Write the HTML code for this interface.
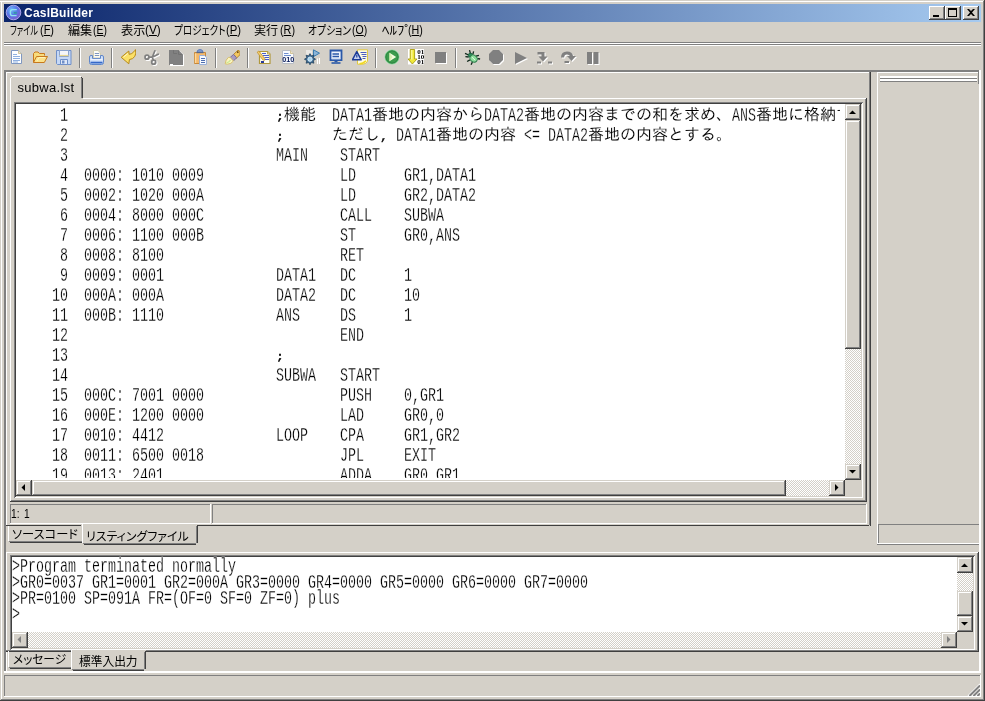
<!DOCTYPE html>
<html lang="ja"><head><meta charset="utf-8"><title>CaslBuilder</title>
<style>
*{box-sizing:border-box;margin:0;padding:0}
html,body{width:985px;height:701px;overflow:hidden;background:#d4d0c8}
body{position:relative;font-family:"Liberation Sans","Noto Sans CJK JP",sans-serif;font-feature-settings:"palt";font-size:12px;color:#000}
div,span,i,b,u,svg{position:absolute;display:block}
i{font-style:normal}
.t{white-space:pre;transform-origin:0 0;line-height:14px;height:14px}
.t u{position:static;display:inline;text-decoration:underline;text-decoration-thickness:1px;text-underline-offset:1px}
.mono{-webkit-text-stroke:.26px #fff}
.mono.pm{font-size:11.5px;transform:scaleX(1.1594);margin-top:1px;-webkit-text-stroke:.35px #000}
.jp{-webkit-text-stroke:.12px #fff}
#win{will-change:transform}
.mono,.jp{font-feature-settings:normal}
.mono{font-family:"Liberation Mono","IPAGothic",monospace;font-size:19.5px;line-height:20px;height:20px;white-space:pre;transform-origin:0 0;transform:scaleX(.68376)}
.jp{font-family:"Liberation Mono","IPAGothic",monospace;font-size:16px;line-height:20px;height:20px;white-space:pre}
.out .mono,.out .jp{line-height:16px;height:16px}
.btn{background:#d4d0c8;box-shadow:inset -1px -1px 0 #404040,inset 1px 1px 0 #fff,inset -2px -2px 0 #808080}
.sbtn{background:#d4d0c8;box-shadow:inset -1px -1px 0 #404040,inset 1px 1px 0 #d4d0c8,inset -2px -2px 0 #808080,inset 2px 2px 0 #fff}
.track{background-color:#fff;background-image:conic-gradient(#d4d0c8 25%,#fff 0 50%,#d4d0c8 0 75%,#fff 0);background-size:2px 2px}
.sunk{box-shadow:inset 1px 1px 0 #808080,inset -1px -1px 0 #fff,inset 2px 2px 0 #404040,inset -2px -2px 0 #d4d0c8}
</style></head>
<body>
<div id="win" style="left:0;top:0;width:985px;height:701px;background:#d4d0c8">
<i style="left:0px;top:1px;width:984px;height:1px;background:#ffffff"></i>
<i style="left:1px;top:1px;width:1px;height:698px;background:#ffffff"></i>
<i style="left:984px;top:0px;width:1px;height:701px;background:#404040"></i>
<i style="left:0px;top:700px;width:985px;height:1px;background:#404040"></i>
<i style="left:983px;top:1px;width:1px;height:699px;background:#808080"></i>
<i style="left:1px;top:699px;width:983px;height:1px;background:#808080"></i>
<div id="title" style="left:4px;top:4px;width:977px;height:18px;background:linear-gradient(90deg,#0a246a 0%,#a6caf0 100%)">
<svg style="left:1px;top:0px" width="18" height="18" viewBox="0 0 18 18">
<defs><radialGradient id="ig" cx="35%" cy="30%" r="75%"><stop offset="0" stop-color="#6fb8f8"/><stop offset=".5" stop-color="#5878e8"/><stop offset="1" stop-color="#7a5cd0"/></radialGradient></defs>
<circle cx="8.500" cy="8.500" r="7.300" fill="url(#ig)" stroke="#b4b0f4" stroke-width=".9"/>
<path d="M11.800 5.600H7.600Q5.400 5.600 5.400 7.800V9.400Q5.400 11.600 7.600 11.600H11.600" fill="none" stroke="#8fe4f0" stroke-width="1.400"/>
<path d="M8 7.800h3.800v2.200H8z" fill="#48a8c8"/><path d="M9 8.500h2.800v.9H9z" fill="#2a7890"/>
</svg>
<span class="t" style="left:20px;top:2px;font-weight:bold;font-size:12px;color:#fff;letter-spacing:.22px">CaslBuilder</span>
<div class="btn" style="left:925px;top:2px;width:16px;height:14px"><i style="left:4px;top:9px;width:6px;height:2px;background:#000"></i></div>
<div class="btn" style="left:941px;top:2px;width:16px;height:14px"><i style="left:3px;top:2px;width:9px;height:9px;border:1px solid #000;border-top-width:2px"></i></div>
<div class="btn" style="left:959px;top:2px;width:16px;height:14px"><svg style="left:4px;top:3px" width="8" height="7" viewBox="0 0 8 7"><path d="M0 0h2l2 2 2-2h2L5 3.5 8 7H6L4 5 2 7H0l3-3.5z" fill="#000"/></svg></div>
</div>
<div id="menu" style="left:4px;top:23px;width:977px;height:19px">
<div class="mi" style="left:0;top:0;width:0;height:19px">
<span class="t" style="left:6.03px;top:1px;transform:scaleX(0.6700);">ファイル</span>
<span class="t" style="left:35.69px;top:0px;transform:scaleX(0.9143);">(<u>F</u>)</span>
</div>
<div class="mi" style="left:0;top:0;width:0;height:19px">
<span class="t" style="left:64.00px;top:1px;transform:scaleX(1.0087);">編集</span>
<span class="t" style="left:88.73px;top:0px;transform:scaleX(0.8714);">(<u>E</u>)</span>
</div>
<div class="mi" style="left:0;top:0;width:0;height:19px">
<span class="t" style="left:117.10px;top:1px;transform:scaleX(1.0174);">表示</span>
<span class="t" style="left:141.41px;top:0px;transform:scaleX(0.9857);">(<u>V</u>)</span>
</div>
<div class="mi" style="left:0;top:0;width:0;height:19px">
<span class="t" style="left:170.30px;top:1px;transform:scaleX(0.8016);">プロジェクト</span>
<span class="t" style="left:222.26px;top:0px;transform:scaleX(0.9429);">(<u>P</u>)</span>
</div>
<div class="mi" style="left:0;top:0;width:0;height:19px">
<span class="t" style="left:249.59px;top:1px;transform:scaleX(1.0087);">実行</span>
<span class="t" style="left:275.80px;top:0px;transform:scaleX(0.9000);">(<u>R</u>)</span>
</div>
<div class="mi" style="left:0;top:0;width:0;height:19px">
<span class="t" style="left:303.78px;top:1px;transform:scaleX(0.8154);">オプション</span>
<span class="t" style="left:348.12px;top:0px;transform:scaleX(0.8750);">(<u>O</u>)</span>
</div>
<div class="mi" style="left:0;top:0;width:0;height:19px">
<span class="t" style="left:377.90px;top:1px;transform:scaleX(1.2429);">ﾍﾙﾌﾟ</span>
<span class="t" style="left:404.11px;top:0px;transform:scaleX(0.8933);">(<u>H</u>)</span>
</div>
</div>
<i style="left:4px;top:42px;width:977px;height:1px;background:#808080"></i>
<i style="left:4px;top:43px;width:977px;height:1px;background:#ffffff"></i>
<i style="left:4px;top:44px;width:977px;height:1px;background:#808080"></i>
<i style="left:4px;top:45px;width:977px;height:1px;background:#ffffff"></i>
<div id="toolbar" style="left:4px;top:46px;width:977px;height:24px">
<svg style="left:4px;top:3px" width="16" height="16" viewBox="0 0 16 16"><path d="M3.5 1.5h7l3 3v10h-10z" fill="#fdfeff" stroke="#7f97c0"/>
<path d="M10.5 1.5v3h3" fill="#f4ecc8" stroke="#c9b98a" stroke-width=".8"/>
<path d="M5 5.5h4M5 7.5h7M5 9.5h7M5 11.5h7M5 13h5" stroke="#8fb0e0" stroke-width="1"/></svg>
<svg style="left:28px;top:3px" width="16" height="16" viewBox="0 0 16 16"><path d="M1.5 13.5v-9l1.5-1.5h3l1.5 1.5h5v2" fill="#f8dc7c" stroke="#c8781c"/>
<path d="M1.5 13.5l3-6h11l-3.2 6z" fill="#fbe28a" stroke="#c8781c"/>
<path d="M4.8 12.5l2.2-4h6" stroke="#fff3b8" stroke-width="1" fill="none"/></svg>
<svg style="left:52px;top:3px" width="16" height="16" viewBox="0 0 16 16"><path d="M.5 1.5h14.5v14h-13.5l-1-1z" fill="#c5d8f6" stroke="#6f8fc8"/>
<path d="M3.5 1.5h9v6h-9z" fill="#f4f6fa" stroke="#8aa2cc"/>
<path d="M3.5 6.5h9" stroke="#e8d890" stroke-width="1.2"/>
<path d="M4.5 10.5h7v5h-7z" fill="#dfe8f8" stroke="#6f8fc8"/>
<path d="M6 11.5h2.5v3H6z" fill="#6f8fc8"/></svg>
<i style="left:75px;top:2px;width:1px;height:20px;background:#808080"></i><i style="left:76px;top:2px;width:1px;height:20px;background:#fff"></i>
<svg style="left:84px;top:3px" width="16" height="16" viewBox="0 0 16 16"><path d="M5.500 1.500h4.500l2.500 2.500v5h-7z" fill="#fdfdf6" stroke="#d0ccb0"/>
<path d="M6.800 4.500h4.400M6.800 6.500h4.400" stroke="#7f97c0" stroke-width="1.200"/>
<path d="M1.500 8q0-1.500 1.500-1.500h1.500v3h8v-3h1.500q1.500 0 1.500 1.500v5.500q0 2-2 2h-10q-2 0-2-2z" fill="#cfdff8" stroke="#5f86c8"/>
<path d="M2.500 13.600h12" stroke="#3568c8" stroke-width="1.800"/>
<path d="M2.500 10.500h12" stroke="#eef4fe" stroke-width="1.200"/></svg>
<i style="left:107px;top:2px;width:1px;height:20px;background:#808080"></i><i style="left:108px;top:2px;width:1px;height:20px;background:#fff"></i>
<svg style="left:116px;top:3px" width="16" height="16" viewBox="0 0 16 16"><path d="M1.200 8.300l7.600-6.300l.4 3.400q2.800-.4 4.600-2.600q1.200-1.400 1.600-2.200q1.200 3.600-.6 6.800q-1.800 2.800-5.400 3.200l-.6 4.200z" fill="#fbe068" stroke="#b88a18" stroke-width="1" stroke-linejoin="round"/>
<path d="M3.400 8.200l4.600-3.800" stroke="#fff6c8" stroke-width="1" fill="none"/></svg>
<svg style="left:140px;top:3px" width="17" height="17" viewBox="0 0 17 17"><g fill="none" stroke-linecap="round"><g transform="translate(1 1)" stroke="#fff" stroke-width="1.700"><path d="M5 8.200L8.300 8.200L14.200 5.200M9.400 11.200L8.300 8.200L10.900 1.800"/><circle cx="3" cy="8.200" r="2"/><circle cx="9.700" cy="13.200" r="2"/></g>
<g stroke="#808080" stroke-width="1.700"><path d="M5 8.200L8.300 8.200L14.200 5.200M9.400 11.200L8.300 8.200L10.900 1.800"/><circle cx="3" cy="8.200" r="2"/><circle cx="9.700" cy="13.200" r="2"/></g></g></svg>
<svg style="left:164px;top:3px" width="17" height="18" viewBox="0 0 17 18"><path d="M2 2h10l4 4v11h-14z" fill="#fff"/><path d="M1 1h9.5l4.5 4.5v10.5h-14z" fill="#808080"/>
<path d="M5.5 1v3.5h3.5M10.5 1.5v4h4" stroke="#6e6e6e" stroke-width=".8" fill="none"/>
<path d="M2 15.5h3" stroke="#fff" stroke-width="1"/></svg>
<svg style="left:188px;top:3px" width="16" height="16" viewBox="0 0 16 16"><path d="M2.5 3.5h11v11h-11z" fill="#f4b86a" stroke="#c88838"/>
<path d="M3.5 4.5v9.5" stroke="#fbd9a0" stroke-width="1.4"/>
<path d="M5 3.5q0-3 3-3t3 3z" fill="#7f9cd0" stroke="#5f7cb8"/>
<path d="M4.5 3.5h7" stroke="#5a6a8a" stroke-width="1.3"/>
<path d="M7.5 6.5h5l2 2v7h-7z" fill="#f6f9fe" stroke="#9ab0d8"/>
<path d="M9 9.5h4M9 11.5h4M9 13.5h4" stroke="#4f6fb0" stroke-width="1.1"/></svg>
<i style="left:211px;top:2px;width:1px;height:20px;background:#808080"></i><i style="left:212px;top:2px;width:1px;height:20px;background:#fff"></i>
<svg style="left:220px;top:3px" width="16" height="16" viewBox="0 0 16 16"><path d="M9.5 5.5l4.5-4.3l2 1.3v3.2l-3.7 3.6z" fill="#f4c860" stroke="#b88a30"/>
<path d="M13.2 2.6l1.2 1" stroke="#5a3c10" stroke-width="1.4"/>
<path d="M6.2 8.4l3.4-3l3 3.4l-3.2 3.2z" fill="#a89cc0" stroke="#7a6c98"/>
<path d="M1.2 14.8q.3-4 3.2-6.4l1.8 0l3.2 3.6q-2 3-6 3.2z" fill="#fbf4c0" stroke="#d8c070"/>
<path d="M2.5 14q2.5-.5 4-3" stroke="#c8e890" stroke-width="1.3" fill="none"/></svg>
<i style="left:243px;top:2px;width:1px;height:20px;background:#808080"></i><i style="left:244px;top:2px;width:1px;height:20px;background:#fff"></i>
<svg style="left:252px;top:3px" width="16" height="16" viewBox="0 0 16 16"><path d="M3.5 2.5h8l2.5 2.5v9.500h-10.500z" fill="#fdfdf4" stroke="#b0983c" stroke-width="1.2"/>
<path d="M11.500 2.500v2.500h2.500" fill="#f0e0a0" stroke="#b0983c" stroke-width=".8"/>
<path d="M6 4.500h4M7 6.500h6M8.500 8.500h4.500M9 10.500h4" stroke="#4a5cc8" stroke-width="1.1"/>
<path d="M5 12h3v2H5z" fill="#2a3a9a"/>
<path d="M1.200 3.200l1.600-1.200l6 7.600l-.4 1.800l-1.700-.6z" fill="#f4d070" stroke="#c09030" stroke-width=".8"/></svg>
<svg style="left:276px;top:3px" width="16" height="16" viewBox="0 0 16 16"><path d="M2.500 1.500h8l3 3v10h-11z" fill="#f8fafe" stroke="#b8bcc4"/>
<path d="M10.500 1.500v3h3" fill="#f4e8c0" stroke="#c8b888" stroke-width=".8"/>
<path d="M4 4.500h4.500M4 6.500h7" stroke="#6f8fd0" stroke-width="1.1"/>
<text x="8.2" y="13.300" font-family="Liberation Sans,sans-serif" font-weight="bold" font-size="7.500" text-anchor="middle" fill="#0a1c5c" textLength="12" lengthAdjust="spacingAndGlyphs">010</text></svg>
<svg style="left:300px;top:3px" width="16" height="16" viewBox="0 0 16 16"><path d="M9.500 .8l6 3.400l-6 3.400z" fill="#8ab4d8" stroke="#3a7cb0" stroke-width="1"/>
<path d="M3 1v5M5 1v4.500M7 1.500v4M13.500 9.500v5.500M15.500 9v6" stroke="#fff" stroke-width="1"/>
<g transform="translate(6 10.200)"><path d="M0-5.600l1.300 2.300l2.600-.7l-.6 2.600l2.300 1.400l-2.300 1.300l.6 2.700l-2.600-.7l-1.300 2.300l-1.300-2.300l-2.600.7l.7-2.700l-2.400-1.300l2.400-1.400l-.7-2.600l2.600.7z" fill="#3a6890" stroke="#1c3c58" stroke-width=".7"/>
<circle r="2.200" fill="#a8d4ec" stroke="#e8f4fc" stroke-width=".8"/></g></svg>
<svg style="left:324px;top:3px" width="16" height="16" viewBox="0 0 16 16"><path d="M2.500 1.500h11v9.500h-11z" fill="#eef4fc" stroke="#2a58a8" stroke-width="1.800"/>
<path d="M4.500 5h6.500M4.500 7.500h6.500" stroke="#2a58a8" stroke-width="1.400"/>
<path d="M3.500 10h9" stroke="#b8cce8" stroke-width="1"/>
<path d="M6.500 11.500h3v1.500h-3z" fill="#2a58a8"/><path d="M3.500 14h9" stroke="#2a58a8" stroke-width="1.600"/></svg>
<svg style="left:348px;top:3px" width="16" height="16" viewBox="0 0 16 16"><path d="M5.500 .8h10v11.500q-1.500 2.700-4.500 2.900h-5.500z" fill="#fdfbe4" stroke="#e0c840" stroke-width="1"/>
<path d="M7.500 14.800q3.500-.3 6.500-3" stroke="#f0d820" stroke-width="1.600" fill="none"/>
<path d="M8.500 3.500h6M9.500 5.500h5M10.500 7.500h4M10.500 9.500h3" stroke="#4a5cc0" stroke-width="1.100"/>
<path d="M4.800 2.500l4.400 8.300h-8.800z" fill="#c8d4f0" stroke="#1c3c98" stroke-width="1.500" stroke-linejoin="round"/>
<path d="M4.800 5.500v3" stroke="#1c3c98" stroke-width="1.200"/></svg>
<i style="left:371px;top:2px;width:1px;height:20px;background:#808080"></i><i style="left:372px;top:2px;width:1px;height:20px;background:#fff"></i>
<svg style="left:380px;top:3px" width="16" height="16" viewBox="0 0 16 16"><circle cx="8" cy="8" r="7" fill="#3c9c4c" stroke="#8ce0a0" stroke-width="1"/>
<circle cx="8" cy="8" r="6.200" fill="none" stroke="#2c8040" stroke-width="1"/>
<path d="M5.500 3.800l6.700 4.200l-6.700 4.200z" fill="#f4fce0"/>
<path d="M5.500 3.800l3 4.200l-3 4.200z" fill="#d8f0b0"/></svg>
<svg style="left:404px;top:3px" width="16" height="16" viewBox="0 0 16 16"><path d="M0 0h16v15.500h-16z" fill="#fff"/>
<path d="M2.200 .5h4.400v9.500h2.400l-4.600 5l-4.400-5h2.200z" fill="#f0e838" stroke="#a89c10" stroke-width=".9" stroke-linejoin="round"/>
<path d="M3.800 1v9.500" stroke="#fbf8a0" stroke-width="1.300"/>
<g font-family="Liberation Serif,serif" font-weight="bold" font-size="7" fill="#000" text-anchor="middle"><text x="12.700" y="5">01</text><text x="12.700" y="10.200">10</text><text x="12.700" y="15.300">01</text></g></svg>
<svg style="left:428px;top:3px" width="16" height="16" viewBox="0 0 16 16"><path d="M4 4h11v11h-11z" fill="#fff"/><path d="M3 3h11v11h-11z" fill="#808080"/></svg>
<i style="left:451px;top:2px;width:1px;height:20px;background:#808080"></i><i style="left:452px;top:2px;width:1px;height:20px;background:#fff"></i>
<svg style="left:460px;top:3px" width="17" height="17" viewBox="0 0 17 17"><path d="M5.500 1.100l1.200 4.500M9.600 2.300l-.8 3.300M1 4.300l3.700 1.700M1.400 7.600l3.300.4M3.100 12.500l2.800-1.600M14.900 6.400l-2.900.8M16.100 10l-2.900-.4M7.100 15.700l1.300-2.800" stroke="#10281c" stroke-width="1.300" fill="none"/>
<ellipse cx="6.500" cy="6.200" rx="2.300" ry="2" fill="#2c8c5c" stroke="#1c5c3c" stroke-width=".8"/>
<ellipse cx="9.600" cy="9.600" rx="3.900" ry="3.300" transform="rotate(40 9.600 9.600)" fill="#8cdc9c" stroke="#2c7c4c" stroke-width="1"/>
<path d="M8 8.200l3.200 3" stroke="#e0fce0" stroke-width="1"/></svg>
<svg style="left:484px;top:3px" width="17" height="17" viewBox="0 0 17 17"><path d="M6 2h6l4 4v6l-4 4h-6l-4-4v-6z" fill="#fff"/><path d="M5 1h6l4 4v6l-4 4h-6l-4-4v-6z" fill="#808080"/></svg>
<svg style="left:508px;top:3px" width="17" height="17" viewBox="0 0 17 17"><path d="M4 4l12 6l-12 6z" fill="#fff"/><path d="M3 3l12 6l-12 6z" fill="#808080"/></svg>
<svg style="left:532px;top:3px" width="18" height="17" viewBox="0 0 18 17"><g transform="translate(1 1)"><path d="M1.500 3h7v4.500h3l-4.500 5l-4.500-5h3v-2h-4z" fill="#fff"/><path d="M1 12.500h4v2h-4zM12 12.500h4v2h-4z" fill="#fff"/></g>
<path d="M1.500 3h7v4.500h3l-4.500 5l-4.500-5h3v-2h-4z" fill="#808080"/><path d="M1 12.500h4v2h-4zM12 12.500h4v2h-4z" fill="#808080"/></svg>
<svg style="left:556px;top:3px" width="18" height="17" viewBox="0 0 18 17"><g transform="translate(1 1)"><path d="M1 8.500q0-6 6-6q5.500 0 6 4.500h3l-4.500 5l-4.500-5h2.800q-.5-1.500-2.800-1.500q-2.800 0-2.800 3z" fill="#fff"/><path d="M4.500 12h4.500v2h-4.500z" fill="#fff"/></g>
<path d="M1 8.500q0-6 6-6q5.500 0 6 4.500h3l-4.500 5l-4.500-5h2.800q-.5-1.500-2.800-1.500q-2.800 0-2.800 3z" fill="#808080"/><path d="M4.500 12h4.500v2h-4.500z" fill="#808080"/></svg>
<svg style="left:580px;top:3px" width="17" height="17" viewBox="0 0 17 17"><path d="M4 4h5v12h-5zM10.500 4h5v12h-5z" fill="#fff"/><path d="M3 3h5v12h-5zM9.500 3h5v12h-5z" fill="#808080"/></svg>
</div>
<i style="left:4px;top:70px;width:977px;height:1px;background:#808080"></i>
<i style="left:4px;top:71px;width:977px;height:1px;background:#808080"></i>
<i style="left:4px;top:70px;width:1px;height:601px;background:#808080"></i>
<i style="left:5px;top:70px;width:1px;height:601px;background:#808080"></i>
<i style="left:979px;top:70px;width:1px;height:603px;background:#ffffff"></i>
<i style="left:980px;top:70px;width:1px;height:603px;background:#ffffff"></i>
<div id="left" style="left:6px;top:72px;width:865px;height:474px">
<i style="left:0;top:0;width:863px;height:1px;background:#fff"></i><i style="left:0;top:0;width:1px;height:453px;background:#fff"></i>
<i style="left:863px;top:0;width:1px;height:453px;background:#808080"></i><i style="left:864px;top:0;width:1px;height:454px;background:#404040"></i>
</div>
<div id="toptab" style="left:10px;top:76px;width:73px;height:23px">
<i style="left:0;top:2px;width:1px;height:21px;background:#fff"></i><i style="left:1px;top:1px;width:1px;height:1px;background:#fff"></i><i style="left:2px;top:0;width:69px;height:1px;background:#fff"></i>
<i style="left:71px;top:1px;width:1px;height:1px;background:#404040"></i><i style="left:72px;top:2px;width:1px;height:20px;background:#404040"></i><i style="left:71px;top:2px;width:1px;height:20px;background:#808080"></i>
<span class="t" style="left:7.5px;top:4px;font-size:13px;letter-spacing:.3px;line-height:15px">subwa.lst</span>
</div>
<i style="left:83px;top:98px;width:783px;height:1px;background:#ffffff"></i>
<i style="left:10px;top:98px;width:1px;height:403px;background:#ffffff"></i>
<i style="left:866px;top:98px;width:1px;height:404px;background:#404040"></i>
<i style="left:865px;top:99px;width:1px;height:402px;background:#808080"></i>
<i style="left:10px;top:501px;width:857px;height:1px;background:#404040"></i>
<i style="left:11px;top:500px;width:855px;height:1px;background:#808080"></i>
<div id="editor" class="sunk" style="left:14px;top:102px;width:849px;height:396px;background:#fff;overflow:hidden">
<div id="code" style="left:2px;top:2px;width:824px;height:374px;overflow:hidden">
<div class="ln" style="left:0;top:2px;width:900px;height:20px">
<span class="mono" style="left:44px;top:0">1</span>
<span class="mono pm" style="left:260px;top:0">;</span>
<span class="jp" style="left:268px;top:0">機能</span>
<span class="mono" style="left:316px;top:0">DATA1</span>
<span class="jp" style="left:356px;top:0">番地の内容から</span>
<span class="mono" style="left:468px;top:0">DATA2</span>
<span class="jp" style="left:508px;top:0">番地の内容までの和を求め、</span>
<span class="mono" style="left:716px;top:0">ANS</span>
<span class="jp" style="left:740px;top:0">番地に格納する。</span>
</div>
<div class="ln" style="left:0;top:22px;width:900px;height:20px">
<span class="mono" style="left:44px;top:0">2</span>
<span class="mono pm" style="left:260px;top:0">;</span>
<span class="jp" style="left:316px;top:0">ただし</span>
<span class="mono pm" style="left:364px;top:0">,</span>
<span class="mono" style="left:380px;top:0">DATA1</span>
<span class="jp" style="left:420px;top:0">番地の内容</span>
<span class="mono" style="left:508px;top:0">&lt;=</span>
<span class="mono" style="left:532px;top:0">DATA2</span>
<span class="jp" style="left:572px;top:0">番地の内容とする。</span>
</div>
<div class="ln" style="left:0;top:42px;width:900px;height:20px">
<span class="mono" style="left:44px;top:0">3</span>
<span class="mono" style="left:260px;top:0">MAIN</span>
<span class="mono" style="left:324px;top:0">START</span>
</div>
<div class="ln" style="left:0;top:62px;width:900px;height:20px">
<span class="mono" style="left:44px;top:0">4</span>
<span class="mono" style="left:68px;top:0">0000: 1010 0009</span>
<span class="mono" style="left:324px;top:0">LD</span>
<span class="mono" style="left:388px;top:0">GR1,DATA1</span>
</div>
<div class="ln" style="left:0;top:82px;width:900px;height:20px">
<span class="mono" style="left:44px;top:0">5</span>
<span class="mono" style="left:68px;top:0">0002: 1020 000A</span>
<span class="mono" style="left:324px;top:0">LD</span>
<span class="mono" style="left:388px;top:0">GR2,DATA2</span>
</div>
<div class="ln" style="left:0;top:102px;width:900px;height:20px">
<span class="mono" style="left:44px;top:0">6</span>
<span class="mono" style="left:68px;top:0">0004: 8000 000C</span>
<span class="mono" style="left:324px;top:0">CALL</span>
<span class="mono" style="left:388px;top:0">SUBWA</span>
</div>
<div class="ln" style="left:0;top:122px;width:900px;height:20px">
<span class="mono" style="left:44px;top:0">7</span>
<span class="mono" style="left:68px;top:0">0006: 1100 000B</span>
<span class="mono" style="left:324px;top:0">ST</span>
<span class="mono" style="left:388px;top:0">GR0,ANS</span>
</div>
<div class="ln" style="left:0;top:142px;width:900px;height:20px">
<span class="mono" style="left:44px;top:0">8</span>
<span class="mono" style="left:68px;top:0">0008: 8100</span>
<span class="mono" style="left:324px;top:0">RET</span>
</div>
<div class="ln" style="left:0;top:162px;width:900px;height:20px">
<span class="mono" style="left:44px;top:0">9</span>
<span class="mono" style="left:68px;top:0">0009: 0001</span>
<span class="mono" style="left:260px;top:0">DATA1</span>
<span class="mono" style="left:324px;top:0">DC</span>
<span class="mono" style="left:388px;top:0">1</span>
</div>
<div class="ln" style="left:0;top:182px;width:900px;height:20px">
<span class="mono" style="left:36px;top:0">10</span>
<span class="mono" style="left:68px;top:0">000A: 000A</span>
<span class="mono" style="left:260px;top:0">DATA2</span>
<span class="mono" style="left:324px;top:0">DC</span>
<span class="mono" style="left:388px;top:0">10</span>
</div>
<div class="ln" style="left:0;top:202px;width:900px;height:20px">
<span class="mono" style="left:36px;top:0">11</span>
<span class="mono" style="left:68px;top:0">000B: 1110</span>
<span class="mono" style="left:260px;top:0">ANS</span>
<span class="mono" style="left:324px;top:0">DS</span>
<span class="mono" style="left:388px;top:0">1</span>
</div>
<div class="ln" style="left:0;top:222px;width:900px;height:20px">
<span class="mono" style="left:36px;top:0">12</span>
<span class="mono" style="left:324px;top:0">END</span>
</div>
<div class="ln" style="left:0;top:242px;width:900px;height:20px">
<span class="mono" style="left:36px;top:0">13</span>
<span class="mono pm" style="left:260px;top:0">;</span>
</div>
<div class="ln" style="left:0;top:262px;width:900px;height:20px">
<span class="mono" style="left:36px;top:0">14</span>
<span class="mono" style="left:260px;top:0">SUBWA</span>
<span class="mono" style="left:324px;top:0">START</span>
</div>
<div class="ln" style="left:0;top:282px;width:900px;height:20px">
<span class="mono" style="left:36px;top:0">15</span>
<span class="mono" style="left:68px;top:0">000C: 7001 0000</span>
<span class="mono" style="left:324px;top:0">PUSH</span>
<span class="mono" style="left:388px;top:0">0,GR1</span>
</div>
<div class="ln" style="left:0;top:302px;width:900px;height:20px">
<span class="mono" style="left:36px;top:0">16</span>
<span class="mono" style="left:68px;top:0">000E: 1200 0000</span>
<span class="mono" style="left:324px;top:0">LAD</span>
<span class="mono" style="left:388px;top:0">GR0,0</span>
</div>
<div class="ln" style="left:0;top:322px;width:900px;height:20px">
<span class="mono" style="left:36px;top:0">17</span>
<span class="mono" style="left:68px;top:0">0010: 4412</span>
<span class="mono" style="left:260px;top:0">LOOP</span>
<span class="mono" style="left:324px;top:0">CPA</span>
<span class="mono" style="left:388px;top:0">GR1,GR2</span>
</div>
<div class="ln" style="left:0;top:342px;width:900px;height:20px">
<span class="mono" style="left:36px;top:0">18</span>
<span class="mono" style="left:68px;top:0">0011: 6500 0018</span>
<span class="mono" style="left:324px;top:0">JPL</span>
<span class="mono" style="left:388px;top:0">EXIT</span>
</div>
<div class="ln" style="left:0;top:362px;width:900px;height:20px">
<span class="mono" style="left:36px;top:0">19</span>
<span class="mono" style="left:68px;top:0">0013: 2401</span>
<span class="mono" style="left:324px;top:0">ADDA</span>
<span class="mono" style="left:388px;top:0">GR0,GR1</span>
</div>
</div>
<div class="track" style="left:831px;top:2px;width:16px;height:376px">
<div class="sbtn" style="left:0;top:0;width:16px;height:16px"><svg style="left:4px;top:6px" width="7" height="4" viewBox="0 0 7 4"><path d="M0 4h7L3.5 0.5z" fill="#000"/></svg></div>
<div class="sbtn" style="left:0;top:16px;width:16px;height:229px"></div>
<div class="sbtn" style="left:0;top:360px;width:16px;height:16px"><svg style="left:4px;top:6px" width="7" height="4" viewBox="0 0 7 4"><path d="M0 0h7L3.5 3.5z" fill="#000"/></svg></div>
</div>
<div class="track" style="left:2px;top:378px;width:829px;height:16px">
<div class="sbtn" style="left:0;top:0;width:16px;height:16px"><svg style="left:5px;top:4px" width="4" height="7" viewBox="0 0 4 7"><path d="M4 0v7L0.5 3.5z" fill="#000"/></svg></div>
<div class="sbtn" style="left:16px;top:0;width:754px;height:16px"></div>
<div class="sbtn" style="left:813px;top:0;width:16px;height:16px"><svg style="left:6px;top:4px" width="4" height="7" viewBox="0 0 4 7"><path d="M0 0v7L3.5 3.5z" fill="#000"/></svg></div>
</div>
<i style="left:831px;top:378px;width:16px;height:16px;background:#d4d0c8"></i>
</div>
<i style="left:10px;top:504px;width:200px;height:1px;background:#808080"></i>
<i style="left:10px;top:504px;width:1px;height:19px;background:#808080"></i>
<i style="left:10px;top:523px;width:201px;height:1px;background:#ffffff"></i>
<i style="left:210px;top:504px;width:1px;height:20px;background:#ffffff"></i>
<i style="left:212px;top:504px;width:654px;height:1px;background:#808080"></i>
<i style="left:212px;top:504px;width:1px;height:19px;background:#808080"></i>
<i style="left:212px;top:523px;width:655px;height:1px;background:#ffffff"></i>
<i style="left:866px;top:504px;width:1px;height:20px;background:#ffffff"></i>
<span class="t" style="left:11.2px;top:507px;transform:scaleX(.85);word-spacing:2px">1: 1</span>
<i style="left:6px;top:525px;width:75px;height:1px;background:#404040"></i>
<i style="left:8px;top:526px;width:1px;height:15px;background:#ffffff"></i>
<i style="left:10px;top:542px;width:72px;height:1px;background:#404040"></i>
<i style="left:9px;top:541px;width:73px;height:1px;background:#808080"></i>
<span class="t" style="left:11.78px;top:528px;transform:scaleX(1.0206);">ソースコード</span>
<i style="left:82px;top:524px;width:1px;height:19px;background:#ffffff"></i>
<i style="left:84px;top:544px;width:112px;height:1px;background:#404040"></i>
<i style="left:83px;top:543px;width:113px;height:1px;background:#808080"></i>
<i style="left:197px;top:525px;width:1px;height:18px;background:#404040"></i>
<i style="left:196px;top:526px;width:1px;height:17px;background:#808080"></i>
<span class="t" style="left:86.31px;top:530px;transform:scaleX(0.9950);">リスティングファイル</span>
<i style="left:198px;top:525px;width:671px;height:1px;background:#404040"></i>
<i style="left:877px;top:72px;width:102px;height:1px;background:#ffffff"></i>
<i style="left:877px;top:72px;width:1px;height:473px;background:#ffffff"></i>
<i style="left:978px;top:72px;width:1px;height:12px;background:#808080"></i>
<i style="left:880px;top:76px;width:97px;height:1px;background:#ffffff"></i>
<i style="left:880px;top:77px;width:97px;height:1px;background:#ffffff"></i>
<i style="left:880px;top:78px;width:97px;height:1px;background:#808080"></i>
<i style="left:880px;top:79px;width:97px;height:1px;background:#ffffff"></i>
<i style="left:880px;top:80px;width:97px;height:1px;background:#ffffff"></i>
<i style="left:880px;top:81px;width:97px;height:1px;background:#808080"></i>
<i style="left:878px;top:524px;width:101px;height:1px;background:#808080"></i>
<i style="left:878px;top:524px;width:1px;height:19px;background:#808080"></i>
<i style="left:877px;top:543px;width:102px;height:1px;background:#ffffff"></i>
<i style="left:877px;top:544px;width:102px;height:1px;background:#808080"></i>
<i style="left:6px;top:552px;width:972px;height:1px;background:#ffffff"></i>
<i style="left:6px;top:552px;width:1px;height:119px;background:#ffffff"></i>
<i style="left:978px;top:552px;width:1px;height:100px;background:#404040"></i>
<i style="left:977px;top:553px;width:1px;height:98px;background:#808080"></i>
<div id="output" class="sunk out" style="left:10px;top:555px;width:965px;height:95px;background:#fff;overflow:hidden">
<span class="mono" style="left:2px;top:4px">&gt;Program terminated normally</span>
<span class="mono" style="left:2px;top:20px">&gt;GR0=0037 GR1=0001 GR2=000A GR3=0000 GR4=0000 GR5=0000 GR6=0000 GR7=0000</span>
<span class="mono" style="left:2px;top:36px">&gt;PR=0100 SP=091A FR=(OF=0 SF=0 ZF=0) plus</span>
<span class="mono" style="left:2px;top:52px">&gt;</span>
<div class="track" style="left:947px;top:2px;width:16px;height:75px">
<div class="sbtn" style="left:0;top:0;width:16px;height:16px"><svg style="left:4px;top:6px" width="7" height="4" viewBox="0 0 7 4"><path d="M0 4h7L3.5 0.5z" fill="#000"/></svg></div>
<div class="sbtn" style="left:0;top:34px;width:16px;height:25px"></div>
<div class="sbtn" style="left:0;top:59px;width:16px;height:16px"><svg style="left:4px;top:6px" width="7" height="4" viewBox="0 0 7 4"><path d="M0 0h7L3.5 3.5z" fill="#000"/></svg></div>
</div>
<div class="track" style="left:2px;top:77px;width:945px;height:16px">
<div class="sbtn" style="left:0;top:0;width:16px;height:16px"><svg style="left:5px;top:4px" width="4" height="7" viewBox="0 0 4 7"><path d="M4 0v7L0.5 3.5z" fill="#808080"/></svg></div>
<div class="sbtn" style="left:929px;top:0;width:16px;height:16px"><svg style="left:6px;top:4px" width="4" height="7" viewBox="0 0 4 7"><path d="M0 0v7L3.5 3.5z" fill="#808080"/></svg></div>
</div>
<i style="left:947px;top:77px;width:16px;height:16px;background:#d4d0c8"></i>
</div>
<i style="left:6px;top:650px;width:65px;height:1px;background:#808080"></i>
<i style="left:6px;top:651px;width:65px;height:1px;background:#404040"></i>
<i style="left:8px;top:651px;width:1px;height:16px;background:#ffffff"></i>
<i style="left:10px;top:668px;width:61px;height:1px;background:#404040"></i>
<i style="left:9px;top:667px;width:62px;height:1px;background:#808080"></i>
<span class="t" style="left:12.93px;top:653px;transform:scaleX(0.9698);">メッセージ</span>
<i style="left:71px;top:650px;width:1px;height:19px;background:#ffffff"></i>
<i style="left:73px;top:670px;width:71px;height:1px;background:#404040"></i>
<i style="left:72px;top:669px;width:72px;height:1px;background:#808080"></i>
<i style="left:145px;top:651px;width:1px;height:18px;background:#404040"></i>
<i style="left:144px;top:652px;width:1px;height:17px;background:#808080"></i>
<span class="t" style="left:78.60px;top:655px;transform:scaleX(0.9763);">標準入出力</span>
<i style="left:146px;top:650px;width:832px;height:1px;background:#808080"></i>
<i style="left:146px;top:651px;width:833px;height:1px;background:#404040"></i>
<i style="left:4px;top:671px;width:977px;height:1px;background:#ffffff"></i>
<i style="left:4px;top:672px;width:977px;height:1px;background:#ffffff"></i>
<i style="left:4px;top:675px;width:977px;height:1px;background:#808080"></i>
<i style="left:4px;top:675px;width:1px;height:21px;background:#808080"></i>
<i style="left:4px;top:696px;width:977px;height:1px;background:#ffffff"></i>
<i style="left:980px;top:675px;width:1px;height:22px;background:#ffffff"></i>
<svg style="left:967px;top:683px" width="13" height="13" viewBox="0 0 13 13"><g fill="none"><path d="M13 1L1 13M13 5L5 13M13 9L9 13" stroke="#fff" stroke-width="1.200"/><path d="M13 2.400L2.400 13M13 6.400L6.400 13M13 10.400L10.400 13" stroke="#808080" stroke-width="1.900"/></g></svg>
</div>
</body></html>
